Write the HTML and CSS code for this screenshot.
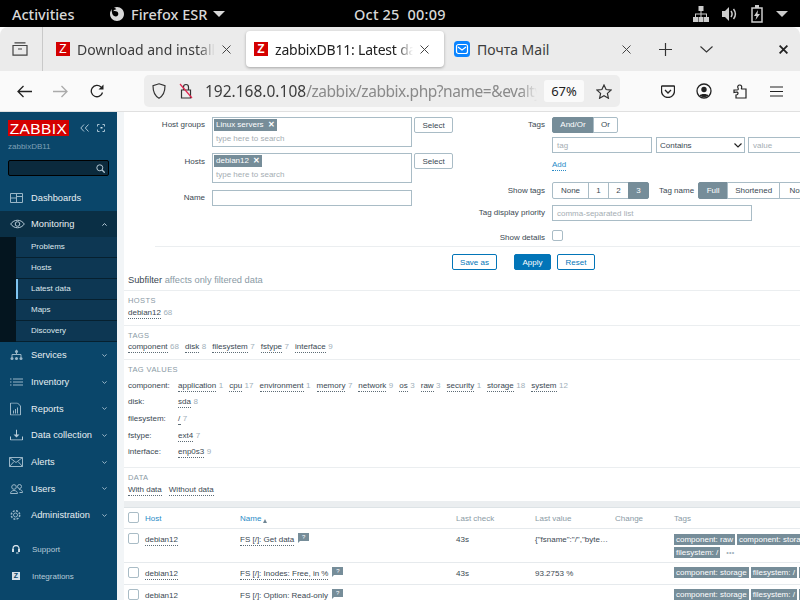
FILE: index.html
```html
<!DOCTYPE html>
<html lang="en">
<head>
<meta charset="utf-8">
<title>zabbixDB11: Latest data</title>
<link rel="stylesheet" href="styles.css">
</head>
<body>
<header class="gnome">
  <span class="g-act">Activities</span>
  <span class="g-app">
    <svg class="g-fx" width="16" height="16" viewBox="0 0 16 16"><path fill="#d8d8d8" d="M8 1c-1 0-2 .2-3 .8C5.800 2 7 2.600 7.300 3.500 6 3.400 4.500 4 4.300 5.300c1.200-.5 2.600-.4 3.700.3 1.400.9 1.700 2.700.8 3.900-.8 1-2.500 1.200-3.700.5C3.700 9.300 3 7.600 3 6 2.500 4.800 2.600 3.800 3 3 1.800 4.300 1 6 1 8c0 3.900 3.100 7 7 7s7-3.100 7-7-3.100-7-7-7z"/></svg>
    Firefox ESR
    <svg width="12" height="6" viewBox="0 0 12 6"><path fill="#d8d8d8" d="M0 0h12L6 6z"/></svg>
  </span>
  <span class="g-clock">Oct 25&nbsp;&nbsp;00:09</span>
  <span class="g-tray">
    <svg width="16" height="16" viewBox="0 0 16 16"><path fill="#ccc" d="M5.500 0h5v5h-5zM0 11h5v5H0zM5.500 11h5v5h-5zM11 11h5v5h-5zM7.500 5h1v2.500h5.500V11h-1V8.500H8.500V11h-1V8.500H3V11H2V7.500h5.500z"/></svg>
    <svg width="16" height="14" viewBox="0 0 16 14"><path fill="#ccc" d="M0 4h3l4-4v14l-4-4H0z"/><path fill="none" stroke="#ccc" stroke-width="1.500" d="M9 4c1.300 1.800 1.300 4.200 0 6M11.500 2c2.300 3 2.300 7 0 10"/></svg>
    <svg width="12" height="18" viewBox="0 0 12 18"><path fill="none" stroke="#ccc" stroke-width="1.500" d="M1 3h10v14H1z"/><path fill="#ccc" d="M4 0h4v3H4zM7 5L3 11h2.500L4.500 15 9 9H6.500z"/></svg>
    <svg width="12" height="6" viewBox="0 0 12 6"><path fill="#ccc" d="M0 0h12L6 6z"/></svg>
  </span>
</header>

<div class="tabbar">
  <div class="tb-view">
    <svg width="16" height="14" viewBox="0 0 16 14"><path fill="none" stroke="#444" stroke-width="1.200" d="M2.500 .8h11M1 3.500h14v9.700H1zM6 7h4"/></svg>
  </div>
  <div class="tab">
    <span class="fav fav-out"><span>Z</span></span>
    <span class="tab-t">Download and install</span>
    <svg class="tab-x" width="9" height="9" viewBox="0 0 9 9"><path stroke="#444" d="M.5.500l8 8M8.500.500l-8 8"/></svg>
  </div>
  <div class="tab tab-on">
    <span class="fav"><span>Z</span></span>
    <span class="tab-t">zabbixDB11: Latest da</span>
    <svg class="tab-x" width="9" height="9" viewBox="0 0 9 9"><path stroke="#444" d="M.5.500l8 8M8.500.500l-8 8"/></svg>
  </div>
  <div class="tab tab-mail">
    <svg class="fav-svg" width="16" height="16" viewBox="0 0 16 16"><rect width="16" height="16" rx="3.500" fill="#0a84ff"/><rect x="2.500" y="3.500" width="11" height="9" rx="2" fill="none" stroke="#fff" stroke-width="1.200"/><path d="M4 6l4 3 4-3" fill="none" stroke="#fff" stroke-width="1.200"/></svg>
    <span class="tab-t">Почта Mail</span>
    <svg class="tab-x" width="9" height="9" viewBox="0 0 9 9"><path stroke="#444" d="M.5.500l8 8M8.500.500l-8 8"/></svg>
  </div>
  <svg class="tb-plus" width="13" height="13" viewBox="0 0 13 13"><path stroke="#333" stroke-width="1.200" d="M6.500 0v13M0 6.500h13"/></svg>
  <svg class="tb-chev" width="13" height="7" viewBox="0 0 13 7"><path fill="none" stroke="#333" stroke-width="1.100" d="M.5.500l6 5.500 6-5.500"/></svg>
  <svg class="tb-close" width="9" height="9" viewBox="0 0 9 9"><path stroke="#222" stroke-width="1.800" d="M.6.600l7.800 7.800M8.400.600L.6 8.400"/></svg>
</div>

<nav class="navbar">
  <svg class="nb-back" width="15" height="13" viewBox="0 0 15 13"><path fill="none" stroke="#222" stroke-width="1.300" d="M15 6.500H1M6.500 1L1 6.500 6.500 12"/></svg>
  <svg class="nb-fwd" width="15" height="13" viewBox="0 0 15 13"><path fill="none" stroke="#aaa" stroke-width="1.300" d="M0 6.500h14M8.500 1L14 6.500 8.500 12"/></svg>
  <svg class="nb-rel" width="14" height="14" viewBox="0 0 14 14"><path fill="none" stroke="#222" stroke-width="1.300" d="M12.500 8.500A5.700 5.700 0 1 1 11 3"/><path fill="#222" d="M13.500.500v5h-5z"/></svg>
  <div class="urlbar">
    <svg class="ub-shield" width="14" height="16" viewBox="0 0 14 16"><path fill="none" stroke="#333" stroke-width="1.200" d="M7 .8l6 2c0 6-1.500 10-6 12.400C2.500 12.800 1 8.800 1 2.800z"/></svg>
    <svg class="ub-lock" width="14" height="16" viewBox="0 0 14 16"><path fill="none" stroke="#333" stroke-width="1.200" d="M2.500 7h9v8h-9zM4.500 7V4a2.500 2.500 0 0 1 5 0v3"/><path stroke="#e22850" stroke-width="1.200" d="M1 1l12 14"/></svg>
    <span class="ub-url"><b>192.168.0.108</b><i>/zabbix/zabbix.php?name=&amp;evalty</i></span>
    <span class="ub-zoom">67%</span>
    <svg class="ub-star" width="16" height="15" viewBox="0 0 16 15"><path fill="none" stroke="#333" stroke-width="1.200" d="M8 1l2.100 4.500 4.900.6-3.600 3.300 1 4.800L8 11.800l-4.400 2.400 1-4.800L1 6.100l4.900-.6z"/></svg>
  </div>
  <svg class="nb-ico nb-pocket" width="14" height="13" viewBox="0 0 14 13"><path fill="none" stroke="#222" stroke-width="1.300" d="M1 1h12a.5.500 0 0 1 .5.500V6a6.500 6.500 0 0 1-13 0V1.500A.5.500 0 0 1 1 1zM4 5l3 3 3-3"/></svg>
  <svg class="nb-ico nb-acct" width="16" height="16" viewBox="0 0 16 16"><circle cx="8" cy="8" r="7" fill="none" stroke="#222" stroke-width="1.300"/><circle cx="8" cy="6.500" r="2.700" fill="#222"/><path fill="#222" d="M3.500 12.500C4.500 10.500 11.500 10.500 12.500 12.500 10 14.500 6 14.500 3.500 12.500z"/></svg>
  <svg class="nb-ico nb-ext" width="15" height="16" viewBox="0 0 15 16"><path fill="none" stroke="#222" stroke-width="1.200" d="M1 7h3c1.500 0 1.500-1 1-2-.8-1.500 0-3 1.700-3S9.200 3.500 8.500 5C8 6 9 6 9.500 6H13v9H3v-3c1.500 0 2-1 2-1.800S4 8.500 1 9.500z"/></svg>
  <svg class="nb-ico nb-menu" width="13" height="11" viewBox="0 0 13 11"><path stroke="#222" stroke-width="1.200" d="M0 1h13M0 5.500h13M0 10h13"/></svg>
</nav>

<div class="app">
  <aside class="side">
    <div class="s-top">
      <span class="s-logo">ZABBIX</span>
      <svg class="s-col" width="9" height="8" viewBox="0 0 9 8"><path fill="none" stroke="#a9c3d3" d="M4 .5L.8 4 4 7.500M8.500.5L5.300 4l3.200 3.500"/></svg>
      <svg class="s-kiosk" width="8" height="8" viewBox="0 0 8 8"><path fill="none" stroke="#a9c3d3" d="M.5 2.500v-2h2M5.500.5h2v2M7.500 5.500v2h-2M2.500 7.500h-2v-2"/><path fill="#cfe0ea" d="M3.500 3h2v1.500h-2z"/></svg>
    </div>
    <div class="s-host">zabbixDB11</div>
    <div class="s-search">
      <svg width="9" height="9" viewBox="0 0 9 9"><circle cx="3.800" cy="3.800" r="3" fill="none" stroke="#b6c8d4"/><path stroke="#b6c8d4" stroke-width="1.300" d="M6 6l2.700 2.700"/></svg>
    </div>
    <ul class="menu">
      <li class="m-item m-first"><svg class="m-ico" width="13" height="10" viewBox="0 0 13 10"><path fill="none" stroke="#9ab6c7" d="M.5.500h12v9H.5zM6.500.500v9M.5 5h6M6.500 3.500h6"/></svg><span>Dashboards</span></li>
      <li class="m-item m-open"><svg class="m-ico" width="15" height="10" viewBox="0 0 15 10"><path fill="none" stroke="#b8ccd9" d="M.7 5C4 .0 11 .0 14.300 5 11 10 4 10 .7 5z"/><circle cx="7.500" cy="5" r="2.300" fill="none" stroke="#b8ccd9"/></svg><span>Monitoring</span><svg class="m-chev m-up" width="5" height="3" viewBox="0 0 5 3"><path fill="none" stroke="#b8ccd9" d="M.4 2.600l2.100-2 2.100 2"/></svg></li>
      <li class="m-sub">
        <a>Problems</a><a>Hosts</a><a class="on">Latest data</a><a>Maps</a><a>Discovery</a>
      </li>
      <li class="m-item"><svg class="m-ico" width="13" height="11" viewBox="0 0 13 11"><path fill="none" stroke="#9ab6c7" d="M6.500 0v5M2 8V5h9v3"/><circle cx="6.500" cy="2" r="1.500" fill="#9ab6c7"/><circle cx="2" cy="9" r="1.500" fill="#9ab6c7"/><circle cx="6.500" cy="9" r="1.500" fill="#9ab6c7"/><circle cx="11" cy="9" r="1.500" fill="#9ab6c7"/></svg><span>Services</span><svg class="m-chev" width="5" height="3" viewBox="0 0 5 3"><path fill="none" stroke="#9ab6c7" d="M.4.400l2.100 2 2.100-2"/></svg></li>
      <li class="m-item"><svg class="m-ico" width="13" height="8" viewBox="0 0 13 8"><path stroke="#9ab6c7" d="M3 1h10M3 4h10M3 7h10M0 1h1.500M0 4h1.500M0 7h1.500"/></svg><span>Inventory</span><svg class="m-chev" width="5" height="3" viewBox="0 0 5 3"><path fill="none" stroke="#9ab6c7" d="M.4.400l2.100 2 2.100-2"/></svg></li>
      <li class="m-item"><svg class="m-ico" width="11" height="13" viewBox="0 0 11 13"><path fill="none" stroke="#9ab6c7" d="M.5.500h7l3 3v9H.5z"/><path fill="#9ab6c7" d="M3 8h1v3H3zM5 6.500h1V11H5zM7 5h1v6H7z"/></svg><span>Reports</span><svg class="m-chev" width="5" height="3" viewBox="0 0 5 3"><path fill="none" stroke="#9ab6c7" d="M.4.400l2.100 2 2.100-2"/></svg></li>
      <li class="m-item"><svg class="m-ico" width="13" height="11" viewBox="0 0 13 11"><path fill="none" stroke="#b8ccd9" d="M.5 7v3.500h12V7M6.500 0v7"/><path fill="#b8ccd9" d="M3.500 5h6l-3 3z"/></svg><span>Data collection</span><svg class="m-chev" width="5" height="3" viewBox="0 0 5 3"><path fill="none" stroke="#9ab6c7" d="M.4.400l2.100 2 2.100-2"/></svg></li>
      <li class="m-item"><svg class="m-ico m-wide" width="14" height="10" viewBox="0 0 14 10"><path fill="none" stroke="#9ab6c7" d="M.5.500h13v9H.5zM.5.500L7 5.500l6.500-5M.5 9.500L5 4.500M13.500 9.500L9 4.500"/></svg><span>Alerts</span><svg class="m-chev" width="5" height="3" viewBox="0 0 5 3"><path fill="none" stroke="#9ab6c7" d="M.4.400l2.100 2 2.100-2"/></svg></li>
      <li class="m-item"><svg class="m-ico" width="13" height="10" viewBox="0 0 13 10"><circle cx="4" cy="3" r="2.300" fill="none" stroke="#9ab6c7"/><circle cx="9.500" cy="2.500" r="2" fill="none" stroke="#9ab6c7"/><path fill="none" stroke="#9ab6c7" d="M.5 9.500c0-4 7-4 7 0zM9 5.500c2 0 3.500 1 3.500 3h-3"/></svg><span>Users</span><svg class="m-chev" width="5" height="3" viewBox="0 0 5 3"><path fill="none" stroke="#9ab6c7" d="M.4.400l2.100 2 2.100-2"/></svg></li>
      <li class="m-item"><svg class="m-ico" width="11" height="11" viewBox="0 0 11 11"><circle cx="5.500" cy="5.500" r="2" fill="none" stroke="#9ab6c7"/><circle cx="5.500" cy="5.500" r="4.200" fill="none" stroke="#9ab6c7" stroke-width="1.500" stroke-dasharray="2 1.300"/></svg><span>Administration</span><svg class="m-chev" width="5" height="3" viewBox="0 0 5 3"><path fill="none" stroke="#9ab6c7" d="M.4.400l2.100 2 2.100-2"/></svg></li>
    </ul>
    <ul class="menu2">
      <li><svg width="8" height="9" viewBox="0 0 8 9"><path fill="none" stroke="#d5e1e9" stroke-width="1.300" d="M1 5V3.500a3 3 0 0 1 6 0V5"/><path fill="#d5e1e9" d="M0 4h2v3H0zM6 4h2v3H6zM4 7.500h2.500v1H4z"/></svg><span>Support</span></li>
      <li><span class="z-mini">Z</span><span>Integrations</span></li>
      <li><span class="z-help">?</span><span>Help</span></li>
    </ul>
  </aside>

  <main class="content">
    <form class="filter">
      <div class="f-col f-left">
        <div class="f-row f-r1">
          <label>Host groups</label>
          <div class="ms">
            <span class="chip">Linux servers <i>✕</i></span>
            <span class="ph">type here to search</span>
          </div>
          <button type="button" class="btn-sel">Select</button>
        </div>
        <div class="f-row f-r2">
          <label>Hosts</label>
          <div class="ms">
            <span class="chip">debian12 <i>✕</i></span>
            <span class="ph">type here to search</span>
          </div>
          <button type="button" class="btn-sel">Select</button>
        </div>
        <div class="f-row">
          <label>Name</label>
          <div class="inp inp-w"></div>
        </div>
      </div>
      <div class="f-col f-right">
        <div class="f-row f-rr1">
          <label>Tags</label>
          <div class="seg"><span class="on">And/Or</span><span>Or</span></div>
        </div>
        <div class="f-row f-rr2">
          <label></label>
          <div class="tagrow">
            <div class="inp t-tag ph">tag</div>
            <div class="inp t-sel">Contains<svg width="8" height="5" viewBox="0 0 8 5"><path fill="none" stroke="#222" stroke-width="1.200" d="M.5.500L4 4 7.500.500"/></svg></div>
            <div class="inp t-val ph">value</div>
          </div>
        </div>
        <div class="f-row f-rr3"><label></label><a class="add">Add</a></div>
        <div class="f-row f-rr4">
          <label>Show tags</label>
          <div class="seg seg-tags"><span>None</span><span>1</span><span>2</span><span class="on">3</span></div>
          <span class="tn-label">Tag name</span>
          <div class="seg seg-name"><span class="on">Full</span><span>Shortened</span><span>None</span></div>
        </div>
        <div class="f-row f-rr5">
          <label>Tag display priority</label>
          <div class="inp inp-w ph">comma-separated list</div>
        </div>
        <div class="f-row f-rr6">
          <label>Show details</label>
          <span class="cb"></span>
        </div>
      </div>
    </form>
    <div class="f-actions">
      <button type="button" class="btn-o btn-save">Save as</button>
      <button type="button" class="btn-p">Apply</button>
      <button type="button" class="btn-o btn-reset">Reset</button>
    </div>

    <div class="sf-title"><span>Subfilter</span> affects only filtered data</div>

    <section class="sf sf-hosts">
      <h4>HOSTS</h4>
      <div class="sf-line"><a>debian12</a><em>68</em></div>
    </section>
    <section class="sf sf-tags">
      <h4>TAGS</h4>
      <div class="sf-line"><a>component</a><em>68</em><a>disk</a><em>8</em><a>filesystem</a><em>7</em><a>fstype</a><em>7</em><a>interface</a><em>9</em></div>
    </section>
    <section class="sf sf-values">
      <h4>TAG VALUES</h4>
      <div class="tv"><span class="tv-k">component:</span><div class="sf-line"><a>application</a><em>1</em><a>cpu</a><em>17</em><a>environment</a><em>1</em><a>memory</a><em>7</em><a>network</a><em>9</em><a>os</a><em>3</em><a>raw</a><em>3</em><a>security</a><em>1</em><a>storage</a><em>18</em><a>system</a><em>12</em></div></div>
      <div class="tv"><span class="tv-k">disk:</span><div class="sf-line"><a>sda</a><em>8</em></div></div>
      <div class="tv"><span class="tv-k">filesystem:</span><div class="sf-line"><a>/</a><em>7</em></div></div>
      <div class="tv"><span class="tv-k">fstype:</span><div class="sf-line"><a>ext4</a><em>7</em></div></div>
      <div class="tv"><span class="tv-k">interface:</span><div class="sf-line"><a>enp0s3</a><em>9</em></div></div>
    </section>
    <section class="sf sf-data">
      <h4>DATA</h4>
      <div class="sf-line"><a>With data</a><a>Without data</a></div>
    </section>

    <div class="band"></div>

    <div class="t-row t-head">
      <div class="c-cb"><span class="cb"></span></div>
      <div class="c-host"><b>Host</b></div>
      <div class="c-name"><b>Name</b><svg width="4" height="4" viewBox="0 0 4 4"><path fill="#6f8594" d="M2 0l2 4H0z"/></svg></div>
      <div class="c-chk">Last check</div>
      <div class="c-val">Last value</div>
      <div class="c-chg">Change</div>
      <div class="c-tags">Tags</div>
    </div>
    <div class="t-row t-r1">
      <div class="c-cb"><span class="cb"></span></div>
      <div class="c-host"><a>debian12</a></div>
      <div class="c-name"><a>FS [/]: Get data</a><span class="help">?</span></div>
      <div class="c-chk">43s</div>
      <div class="c-val">{"fsname":"/","byte…</div>
      <div class="c-chg"></div>
      <div class="c-tags"><span class="tg">component: raw</span><span class="tg">component: storage</span><span class="tg">filesystem: /</span><span class="dots">•••</span></div>
    </div>
    <div class="t-row t-r2">
      <div class="c-cb"><span class="cb"></span></div>
      <div class="c-host"><a>debian12</a></div>
      <div class="c-name"><a>FS [/]: Inodes: Free, in %</a><span class="help">?</span></div>
      <div class="c-chk">43s</div>
      <div class="c-val">93.2753 %</div>
      <div class="c-chg"></div>
      <div class="c-tags"><span class="tg">component: storage</span><span class="tg">filesystem: /</span><span class="tg">fstype</span></div>
    </div>
    <div class="t-row t-r2">
      <div class="c-cb"><span class="cb"></span></div>
      <div class="c-host"><a>debian12</a></div>
      <div class="c-name"><a>FS [/]: Option: Read-only</a><span class="help">?</span></div>
      <div class="c-chk"></div>
      <div class="c-val"></div>
      <div class="c-chg"></div>
      <div class="c-tags"><span class="tg">component: storage</span><span class="tg">filesystem: /</span><span class="tg">fstype</span></div>
    </div>
  </main>
</div>
</body>
</html>
```
FILE: styles.css
```css
* { box-sizing: border-box; }
html, body { margin: 0; padding: 0; }
body { width: 800px; height: 600px; overflow: hidden; display: flex; flex-direction: column; background: #fff; font-family: "Liberation Sans", Arial, sans-serif; font-size: 8px; color: #1f2c33; }
svg { display: block; flex: none; }
ul { list-style: none; margin: 0; padding: 0; }
a { text-decoration: none; }
button { font-family: inherit; margin: 0; cursor: pointer; }

/* GNOME bar */
.gnome { height: 27px; flex: none; background: #000; color: #d8d8d8; font: 500 14.500px "Noto Sans", sans-serif; display: flex; align-items: center; padding-left: 12px; }
.g-act { width: 97px; }
.g-app { display: flex; align-items: center; gap: 6px; width: 245px; }
.g-clock { width: 339px; letter-spacing: .2px; white-space: nowrap; }
.g-tray { display: flex; align-items: center; gap: 13px; }

/* tabs */
.tabbar { height: 44px; flex: none; background: #ebebeb; display: flex; align-items: center; border-radius: 8px 8px 0 0; font: 14px "Noto Sans", sans-serif; color: #3c3c3c; }
.tb-view { width: 43px; height: 44px; border-right: 1px solid #c9c9c9; display: flex; align-items: center; justify-content: center; padding-right: 2px; }
.tab { width: 203px; height: 36px; display: flex; align-items: center; padding-left: 13px; padding-right: 15px; gap: 7px; border-radius: 4px; overflow: hidden; flex: none; }
.tab-on { background: #fff; box-shadow: 0 1px 3px rgba(0,0,0,.3); color: #222; padding-left: 8px; width: 198px; }
.tab-on .tab-t { letter-spacing: -.2px; }
.tab-mail { width: 202px; padding-left: 10px; }
.tab-t { flex: 1; white-space: nowrap; overflow: hidden; -webkit-mask-image: linear-gradient(90deg, #000 88%, transparent 100%); mask-image: linear-gradient(90deg, #000 88%, transparent 100%); }
.tab-mail .tab-t { -webkit-mask-image: none; mask-image: none; }
.fav { width: 14px; height: 14px; background: #d40000; color: #fff; font: 700 12px/14px "Liberation Sans", sans-serif; text-align: center; flex: none; display: block; }
.fav-out { font-weight: 400; }
.fav-svg { flex: none; }
.tb-plus { margin-left: 13px; }
.tb-chev { margin-left: 28px; }
.tb-close { margin-left: 66px; }

/* nav */
.navbar { height: 41px; flex: none; background: #fafafa; border-bottom: 1px solid #e0e0e0; display: flex; align-items: center; padding-left: 17px; }
.nb-fwd { margin-left: 21px; }
.nb-rel { margin-left: 22px; }
.urlbar { width: 476px; height: 32px; background: #ededed; border-radius: 5px; display: flex; align-items: center; padding-left: 8px; font: 15.500px "Noto Sans", sans-serif; color: #8a8a8a; overflow: hidden; flex: none; margin-left: 40px; }
.ub-lock { margin-left: 13px; }
.ub-url { margin-left: 12px; width: 332px; overflow: hidden; white-space: nowrap; -webkit-mask-image: linear-gradient(90deg, #000 95%, transparent 100%); mask-image: linear-gradient(90deg, #000 95%, transparent 100%); flex: none; }
.ub-url b { font-weight: 400; color: #3c3c3c; }
.ub-url i { font-style: normal; letter-spacing: -.45px; }
.ub-zoom { width: 40px; height: 22px; background: #fafafa; border-radius: 3px; color: #222; font-size: 13px; line-height: 22px; text-align: center; margin-left: 7px; flex: none; }
.ub-star { margin-left: 12px; }
.nb-pocket { margin-left: 41px; }
.nb-acct { margin-left: 21px; }
.nb-ext { margin-left: 21px; }
.nb-menu { margin-left: 22px; }

/* app */
.app { flex: 1; min-height: 0; display: flex; overflow: hidden; }
.side { width: 117px; flex: none; background: #0a466a; color: #f2f2f2; display: flex; flex-direction: column; }
.side > * { flex: none; }
.s-top { display: flex; align-items: center; height: 16px; margin-top: 8px; padding-left: 8px; }
.s-logo { width: 61px; height: 16px; background: #d40000; color: #fff; font-size: 15.500px; line-height: 17px; text-align: center; letter-spacing: .4px; }
.s-col { margin-left: 11px; }
.s-kiosk { margin-left: 8px; }
.s-host { color: #7fa1b6; height: 10px; line-height: 10px; margin: 6px 0 0 8px; font-size: 8px; }
.s-search { margin: 8px 8px 0; height: 16px; background: #0b2a3d; border: 1px solid #000; border-radius: 2px; display: flex; align-items: center; justify-content: flex-end; padding-right: 3px; }
.menu { margin-top: 9px; }
.m-item { height: 26.700px; display: flex; align-items: center; font-size: 9.300px; position: relative; padding-left: 31px; color: #e8eef2; }
.m-first, .m-open { height: 26px; }
.m-ico { position: absolute; left: 10px; top: 50%; transform: translateY(-50%); }
.m-wide { left: 9px; }
.m-chev { position: absolute; right: 10px; top: 12px; }
.m-open { background: #0a2f45; }
.m-sub { background: #04151f; padding-left: 16px; display: block; }
.m-sub a { display: block; height: 21px; line-height: 20px; padding-left: 15px; background: #0d3753; border-bottom: 1px solid #06202f; color: #dfe8ee; font-size: 8px; }
.m-sub a.on { box-shadow: inset 2px 0 0 #7fc4f0; }
.menu2 { margin-top: 7px; }
.menu2 li { height: 27px; display: flex; align-items: center; position: relative; padding-left: 32px; color: #b7cbd8; font-size: 8px; }
.menu2 svg, .z-mini, .z-help { position: absolute; left: 12px; top: 9px; }
.z-mini { width: 8px; height: 8px; background: #d5e1e9; color: #0a466a; font: 700 7px/8px "Liberation Sans", sans-serif; text-align: center; }
.z-help { color: #d5e1e9; font-weight: 700; font-size: 9px; }

/* content */
.content { flex: 1; min-width: 0; margin-left: 7px; overflow: hidden; white-space: nowrap; background: #fff; box-shadow: -7px 0 0 #f2f5f7; color: #3a4852; }

.filter { display: flex; height: 135px; padding-top: 5px; margin-left: 31px; border-bottom: 1px solid #ebeef0; }
.f-col { flex: none; }
.f-left { width: 340px; margin-left: -24px; }
.f-row { display: flex; align-items: flex-start; }
.f-row label { width: 74px; flex: none; text-align: right; margin-right: 7px; line-height: 11px; }
.f-r1 { height: 36px; }
.f-r2 { height: 37px; }
.f-r2 > label { padding-top: 3px !important; }
.ms { width: 200px; height: 30px; border: 1px solid #a9bcc6; padding: 1px; flex: none; display: flex; flex-direction: column; align-items: flex-start; }
.chip { height: 12px; line-height: 12px; background: #768d99; color: #fff; padding: 0 2px; display: block; }
.chip i { font-style: normal; font-size: 8px; margin-left: 2px; font-weight: 700; }
.ph { color: #a5adb3; }
.ms .ph { margin: 3px 0 0 2px; line-height: 10px; }
.btn-sel { width: 39px; height: 16px; margin-left: 2px; background: #fff; border: 1px solid #a9bcc6; border-radius: 2px; font-size: 8px; padding: 0; color: #3a4852; }
.inp { height: 16px; border: 1px solid #a9bcc6; line-height: 15px; padding-left: 4px; flex: none; background: #fff; }
.inp-w { width: 200px; }

.f-rr1 { height: 20px; }
.f-rr2 { height: 22px; }
.f-rr3 { height: 23px; }
.f-rr4 { height: 23px; }
.f-rr5 { height: 25px; }
.f-row > label { padding-top: 2px; }
.f-rr4 > label { padding-top: 3px; }
.seg { display: flex; height: 16px; flex: none; }
.seg-tags, .seg-name { height: 17px; }
.seg span { border: 1px solid #a9bcc6; margin-left: -1px; line-height: 14px; text-align: center; background: #fff; }
.seg-tags span, .seg-name span { line-height: 15px; }
.seg span:first-child { margin-left: 0; border-radius: 2px 0 0 2px; }
.seg span:last-child { border-radius: 0 2px 2px 0; }
.seg span.on { background: #768d99; border-color: #768d99; color: #fff; }
.f-rr1 .seg span:nth-child(1) { width: 42px; }
.f-rr1 .seg span:nth-child(2) { width: 25px; }
.tagrow { display: flex; gap: 4px; }
.t-tag { width: 100px; }
.t-sel { width: 89px; display: flex; align-items: center; justify-content: space-between; padding-right: 2px; padding-left: 3px; margin-right: -1px; }
.t-val { width: 60px; }
.add { color: #2a8bc7; border-bottom: 1px dotted #2a8bc7; line-height: 10px; margin-top: 1px; }
.seg-tags span:nth-child(1) { width: 37px; }
.seg-tags span:nth-child(2) { width: 21px; }
.seg-tags span:nth-child(3) { width: 21px; }
.seg-tags span:nth-child(4) { width: 21px; }
.tn-label { margin-left: 10px; margin-right: 4px; line-height: 17px; }
.seg-name span:nth-child(1) { width: 30px; }
.seg-name span:nth-child(2) { width: 53px; }
.seg-name span:nth-child(3) { width: 40px; }
.cb { display: block; width: 11px; height: 11px; border: 1px solid #a9bcc6; border-radius: 2px; background: #fff; }

.f-actions { display: flex; height: 27px; align-items: flex-start; padding: 7px 0 0 328px; }
.btn-o, .btn-p { height: 16px; font-size: 8px; padding: 0; border-radius: 2px; border: 1px solid #0275b8; }
.btn-o { background: #fff; color: #0275b8; }
.btn-p { background: #0275b8; color: #fff; }
.btn-save { width: 45px; }
.btn-p { width: 37px; margin-left: 17px; }
.btn-reset { width: 38px; margin-left: 6px; }

.sf-title { height: 13px; line-height: 13px; margin-left: 4px; font-size: 9.300px; color: #8a9aa5; }
.sf-title span { color: #3a4852; }
.sf { border-top: 1px solid #ebeef0; padding: 5px 0 0 4px; }
.sf h4 { margin: 0; font-weight: 400; font-size: 7.500px; letter-spacing: .4px; color: #8a9aa5; line-height: 9px; }
.sf-line { display: flex; align-items: flex-start; }
.sf-line a { border-bottom: 1px dotted #5c6b75; color: #3a4852; line-height: 9px; padding-bottom: 1px; }
.sf-line em { font-style: normal; color: #a1b0ba; line-height: 9px; margin: 0 6px 0 2.500px; }
.sf-hosts { height: 35px; margin-top: 3px; }
.sf-hosts .sf-line, .sf-data .sf-line { margin-top: 3px; }
.sf-tags { height: 34px; }
.sf-tags .sf-line { margin-top: 2px; }
.sf-values { height: 108px; }
.tv { display: flex; height: 16.600px; align-items: center; }
.sf-values h4 { margin-bottom: 4px; }
.tv-k { width: 50px; flex: none; padding-bottom: 2px; }
.sf-data { height: 34px; }
.sf-data .sf-line a { margin-right: 7px; }

.band { height: 7px; background: #ebeef0; border-bottom: 1px solid #dde3e6; }
.t-row { display: flex; border-bottom: 1px solid #e6eaed; }
.t-row > div { flex: none; padding-top: 6px; line-height: 10px; }
.t-head { height: 21px; color: #8a9aa5; }
.t-head b { font-weight: 400; color: #2a8bc7; }
.t-r1 { height: 34px; }
.t-r2 { height: 22px; }
.t-row > .c-cb { width: 21px; padding-left: 4px; padding-top: 4px; }
.c-host { width: 95px; }
.t-row > .c-name { width: 216px; display: flex; align-items: flex-start; gap: 3px; }
.c-chk { width: 79px; }
.c-val { width: 80px; }
.c-chg { width: 59px; }
.t-row > .c-tags { width: 140px; padding-top: 5px; white-space: normal; }
.t-row.t-r2 > .c-tags { padding-top: 4px; white-space: nowrap; }
.t-row.t-head > .c-tags { padding-top: 6px; }
.c-host a, .c-name a { border-bottom: 1px dotted #5c6b75; line-height: 9px; padding-bottom: 1px; display: inline-block; }
.t-head .c-name svg { align-self: center; margin-left: -1px; }
.help { display: block; width: 11px; height: 8px; background: #768d99; color: #fff; font-size: 6px; line-height: 8px; text-align: center; margin-top: -2px; margin-left: 1px; position: relative; }
.help::after { content: ""; position: absolute; left: 0; top: 8px; border-top: 2px solid #768d99; border-right: 2px solid transparent; }
.tg { display: inline-block; background: #768d99; color: #fff; height: 11px; line-height: 11px; padding: 0 2px; margin: 0 2px 2px 0; vertical-align: top; white-space: nowrap; }
.dots { color: #a1b0ba; margin-left: 4px; font-size: 7px; line-height: 11px; letter-spacing: .3px; }
```
